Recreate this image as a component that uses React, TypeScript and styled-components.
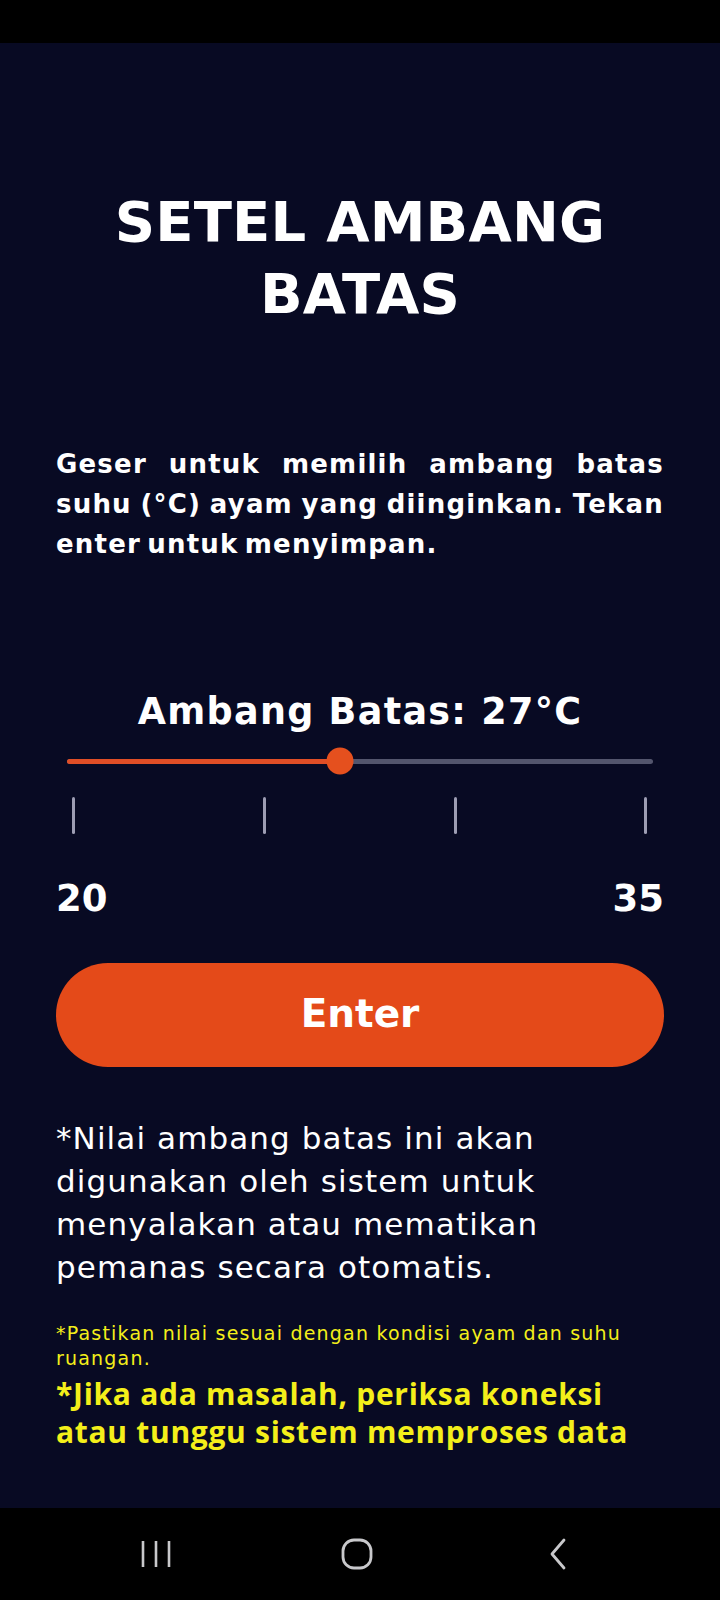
import React from "react";
import styled, { createGlobalStyle } from "styled-components";

const Global = createGlobalStyle`
  html, body { margin: 0; padding: 0; background: #000; }
  body { font-family: "DejaVu Sans", "Open Sans", sans-serif; }
  * { box-sizing: border-box; }
`;

const Screen = styled.div`
  width: 720px;
  height: 1600px;
  display: flex;
  flex-direction: column;
  background: #000;
`;

const StatusBar = styled.div`
  height: 43px;
  background: #000;
  flex: none;
`;

const Main = styled.main`
  flex: 1;
  background: #080a23;
  padding: 0 56px;
  display: flex;
  flex-direction: column;
  color: #fff;
`;

const Title = styled.h1`
  margin: 143px 0 0;
  font-size: 56px;
  line-height: 72px;
  font-weight: 700;
  text-align: center;
  letter-spacing: 0.2px;
`;

const Intro = styled.p`
  margin: 114px 0 0;
  font-size: 26px;
  line-height: 40px;
  font-weight: 700;
  letter-spacing: 1.2px;
  word-spacing: -4px;
  text-align: justify;
`;

const SliderBlock = styled.section`
  margin-top: 124px;
  display: flex;
  flex-direction: column;
`;

const ValueLabel = styled.div`
  font-size: 36.5px;
  line-height: 48px;
  font-weight: 700;
  letter-spacing: 1.3px;
  text-align: center;
`;

const TrackArea = styled.div`
  position: relative;
  height: 28px;
  margin: 11px 11px 0;
  display: flex;
  align-items: center;
`;

const Track = styled.div`
  flex: 1;
  height: 5px;
  border-radius: 2.5px;
  background: #53556d;
  display: flex;
`;

const Fill = styled.div`
  height: 100%;
  background: #e04e26;
  border-radius: 2.5px;
`;

const Thumb = styled.div`
  position: absolute;
  top: 50%;
  width: 27px;
  height: 27px;
  border-radius: 50%;
  background: #e5501e;
  transform: translate(-50%, -50%);
`;

const Ticks = styled.div`
  margin-top: 22px;
  padding: 0 16.5px 0 16px;
  display: flex;
  justify-content: space-between;
`;

const Tick = styled.span`
  width: 3px;
  height: 37px;
  border-radius: 1.5px;
  background: #9d9db3;
`;

const RangeRow = styled.div`
  margin-top: 41px;
  display: flex;
  justify-content: space-between;
  font-size: 37px;
  line-height: 48px;
  font-weight: 700;
`;

const EnterButton = styled.button`
  margin-top: 40px;
  height: 104px;
  border: none;
  border-radius: 52px;
  background: #e44a19;
  color: #fff;
  font-family: inherit;
  font-size: 39px;
  font-weight: 700;
  padding: 0 0 4px;
  cursor: pointer;
`;

const Note = styled.p`
  margin: 50px 0 0;
  font-size: 31px;
  line-height: 43px;
  font-weight: 400;
  letter-spacing: 1.1px;
`;

const SmallWarn = styled.p`
  margin: 32px 0 0;
  font-size: 19px;
  line-height: 25px;
  color: #f4ef1a;
  font-weight: 400;
  letter-spacing: 1.2px;
`;

const BigWarn = styled.p`
  margin: 3.5px 0 0;
  font-family: "Open Sans", "DejaVu Sans", sans-serif;
  font-size: 30px;
  line-height: 38px;
  color: #f4ef1a;
  font-weight: 700;
  letter-spacing: 0.7px;
`;

const NavBar = styled.nav`
  height: 92px;
  flex: none;
  background: #000;
  display: flex;
  align-items: center;
  justify-content: center;
  gap: 169px;
  padding: 0 7px 0 0;
`;

const NavIcon = styled.svg`
  width: 32px;
  height: 32px;
  color: #c8c8cb;
`;

export default function App() {
  const min = 20;
  const max = 35;
  const value = 27;
  const pct = ((value - min) / (max - min)) * 100;

  return (
    <>
      <Global />
      <Screen>
        <StatusBar />
        <Main>
          <Title>
            SETEL AMBANG
            <br />
            BATAS
          </Title>
          <Intro>
            Geser untuk memilih ambang batas suhu (°C) ayam yang diinginkan. Tekan enter untuk
            menyimpan.
          </Intro>
          <SliderBlock>
            <ValueLabel>Ambang Batas: {value}°C</ValueLabel>
            <TrackArea>
              <Track>
                <Fill style={{ width: `${pct}%` }} />
              </Track>
              <Thumb style={{ left: `${pct}%` }} />
            </TrackArea>
            <Ticks>
              <Tick />
              <Tick />
              <Tick />
              <Tick />
            </Ticks>
            <RangeRow>
              <span>{min}</span>
              <span>{max}</span>
            </RangeRow>
          </SliderBlock>
          <EnterButton>Enter</EnterButton>
          <Note>
            *Nilai ambang batas ini akan digunakan oleh sistem untuk menyalakan atau mematikan
            pemanas secara otomatis.
          </Note>
          <SmallWarn>*Pastikan nilai sesuai dengan kondisi ayam dan suhu ruangan.</SmallWarn>
          <BigWarn>*Jika ada masalah, periksa koneksi atau tunggu sistem memproses data</BigWarn>
        </Main>
        <NavBar>
          <NavIcon viewBox="0 0 32 32" fill="none" stroke="currentColor" strokeWidth="2.6">
            <line x1="3" y1="3" x2="3" y2="29" />
            <line x1="16" y1="3" x2="16" y2="29" />
            <line x1="29" y1="3" x2="29" y2="29" />
          </NavIcon>
          <NavIcon viewBox="0 0 32 32" fill="none" stroke="currentColor" strokeWidth="2.8">
            <rect x="2" y="2" width="28" height="28" rx="11" />
          </NavIcon>
          <NavIcon viewBox="0 0 32 32" fill="none" stroke="currentColor" strokeWidth="2.8" strokeLinecap="round" strokeLinejoin="round">
            <polyline points="22,2 10,16 22,30" />
          </NavIcon>
        </NavBar>
      </Screen>
    </>
  );
}
